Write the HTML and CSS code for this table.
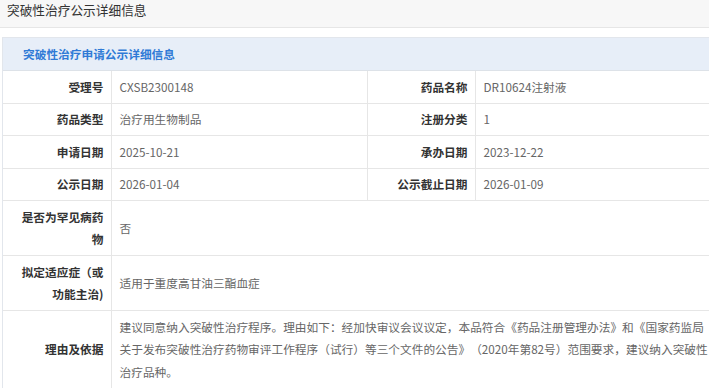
FILE: index.html
```html
<!DOCTYPE html>
<html lang="zh-CN">
<head>
<meta charset="utf-8">
<title>突破性治疗公示详细信息</title>
<link rel="stylesheet" href="styles.css">
</head>
<body>
<div class="topbar">突破性治疗公示详细信息</div>
<div class="panel">
  <div class="panel-head">突破性治疗申请公示详细信息</div>
  <table class="detail">
    <colgroup>
      <col class="c-label"><col class="c-value"><col class="c-label"><col>
    </colgroup>
    <tr>
      <th>受理号</th><td>CXSB2300148</td>
      <th>药品名称</th><td>DR10624注射液</td>
    </tr>
    <tr>
      <th>药品类型</th><td>治疗用生物制品</td>
      <th>注册分类</th><td>1</td>
    </tr>
    <tr>
      <th>申请日期</th><td>2025-10-21</td>
      <th>承办日期</th><td>2023-12-22</td>
    </tr>
    <tr>
      <th>公示日期</th><td>2026-01-04</td>
      <th>公示截止日期</th><td>2026-01-09</td>
    </tr>
    <tr>
      <th>是否为罕见病药物</th><td colspan="3">否</td>
    </tr>
    <tr>
      <th>拟定适应症（或功能主治)</th><td colspan="3">适用于重度高甘油三酯血症</td>
    </tr>
    <tr>
      <th>理由及依据</th><td colspan="3">建议同意纳入突破性治疗程序。理由如下：经加快审议会议议定，本品符合《药品注册管理办法》和《国家药监局关于发布突破性治疗药物审评工作程序（试行）等三个文件的公告》（2020年第82号）范围要求，建议纳入突破性治疗品种。</td>
    </tr>
  </table>
</div>
</body>
</html>
```
FILE: styles.css
```css
html, body {
  margin: 0;
  padding: 0;
  overflow: hidden;
  background: #fff;
}
body {
  font-family: "Noto Sans CJK SC", "Microsoft YaHei", sans-serif;
  font-size: 11.7px;
  color: #333;
  text-spacing-trim: space-all;
}
.topbar {
  height: 28px;
  box-sizing: border-box;
  padding: 0 7px;
  line-height: 20px;
  font-size: 12.7px;
  color: #333;
  background: #f7f7f7;
  border-bottom: 1px solid #e6e6e6;
}
.panel {
  margin: 9px 0 0 2px;
  width: 719px;
  border: 1px solid #e2e6ec;
  border-bottom: none;
}
.panel-head {
  height: 32px;
  line-height: 32px;
  padding-left: 20px;
  background: #e7eef8;
  color: #2f7ad6;
  font-weight: bold;
  border-bottom: 1px solid #dde2e8;
}
.detail {
  width: 100%;
  table-layout: fixed;
  border-collapse: collapse;
}
.c-label { width: 108px; }
.c-value { width: 256px; }
.detail th,
.detail td {
  border: 1px solid #e6e6e6;
  padding: 4.5px 7px 4.5px 8px;
  line-height: 22.5px;
  vertical-align: middle;
}
.detail tr:first-child th,
.detail tr:first-child td { border-top: none; }
.detail th:first-child { border-left: none; }
.detail th {
  text-align: right;
  font-weight: bold;
  color: #333;
}
.detail td {
  text-align: left;
  color: #666;
}
```
